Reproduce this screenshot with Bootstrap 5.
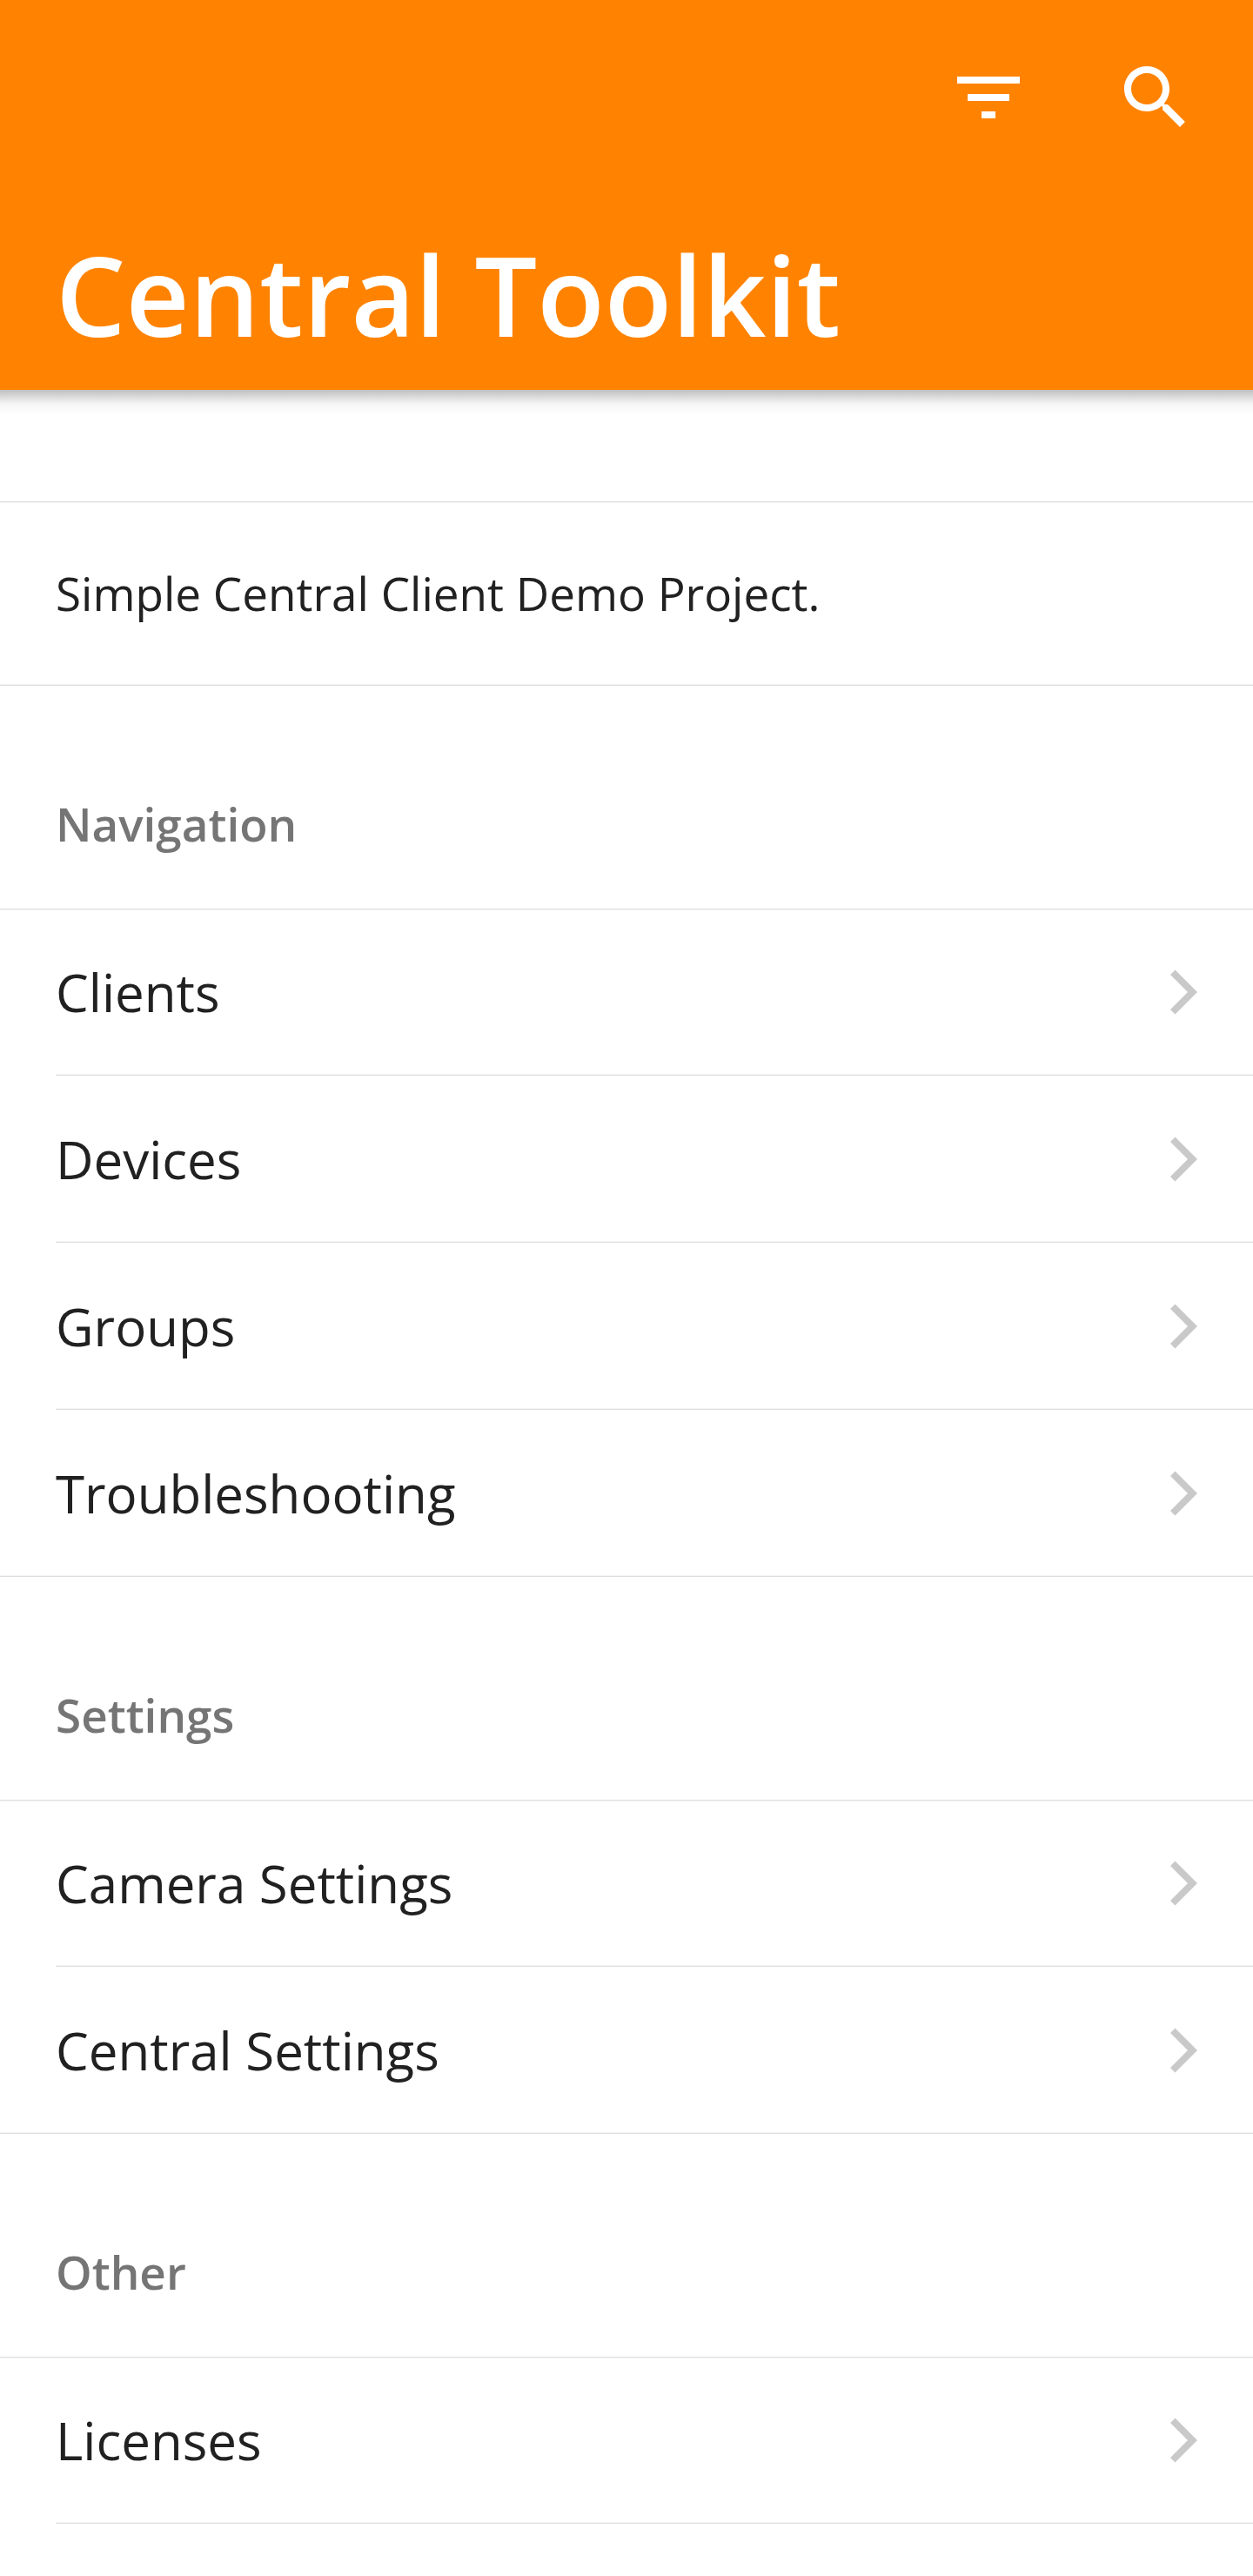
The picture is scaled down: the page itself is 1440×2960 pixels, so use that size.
<!DOCTYPE html>
<html lang="en">
<head>
<meta charset="utf-8">
<meta name="viewport" content="width=device-width, initial-scale=1">
<title>Central Toolkit</title>
<link rel="stylesheet" href="https://cdn.jsdelivr.net/npm/bootstrap@5.3.0/dist/css/bootstrap.min.css">
<style>
  :root {
    --brand: #ff8300;
    --gutter: 64px;
    --line-top: linear-gradient(#dfdfdf 50%, #f3f3f3 50%);
    --line-bottom: linear-gradient(#f3f3f3 50%, #dfdfdf 50%);
  }
  body {
    font-family: "Open Sans", "Noto Sans", sans-serif;
    color: #212121;
    background: #fff;
  }
  .app-header { background: var(--brand); color: #fff; }
  .app-actions { height: 224px; padding-right: 16px; }
  .icon-btn { padding: 0 48px; color: #fff; border: 0; border-radius: 0; }
  .icon-btn:hover, .icon-btn:active { color: #fff; opacity: .8; }
  .icon-btn svg { width: 96px; height: 96px; }
  .app-title {
    padding: 4px var(--gutter) 0;
    font-size: 127px;
    font-weight: 600;
    line-height: 220px;
  }
  .header-shade {
    height: 32px;
    margin-bottom: 96px;
    background: linear-gradient(rgba(0,0,0,.25) 0%, rgba(0,0,0,.08) 40%, rgba(0,0,0,.04) 50%, rgba(0,0,0,0) 90%);
  }
  .intro-block {
    padding: 64px var(--gutter);
    font-size: 53px;
    line-height: 84px;
    background: var(--line-top) no-repeat 0 0 / 100% 2px, var(--line-bottom) no-repeat 0 100% / 100% 2px;
  }
  .section-title {
    padding: 131px var(--gutter) 69px;
    font-size: 53px;
    font-weight: 600;
    line-height: 56px;
    color: #757575;
  }
  .link-list { background: var(--line-top) no-repeat 0 0 / 100% 2px; }
  .link-row {
    min-height: 192px;
    padding: 0 var(--gutter);
    font-size: 60px;
    line-height: 96px;
    color: inherit;
    background: var(--line-bottom) no-repeat var(--gutter) 100% / 100% 2px;
  }
  .link-list:not(.is-open) li:last-child .link-row { background-position: 0 100%; }
  .link-row svg { width: 32px; height: 52px; fill: #c9c9c9; }
</style>
<script src="https://cdn.jsdelivr.net/npm/bootstrap@5.3.0/dist/js/bootstrap.bundle.min.js"></script>
</head>
<body>
<svg class="d-none" aria-hidden="true">
  <symbol id="chevron" viewBox="0 0 32 52"><path d="M6.500 .5L32 26 6.500 51.500 1 46 21 26 1 6z"/></symbol>
</svg>

<header class="app-header">
  <div class="app-actions d-flex justify-content-end align-items-stretch">
    <button type="button" class="btn icon-btn d-flex align-items-center" aria-label="Filter">
      <svg viewBox="0 0 24 24" fill="currentColor" aria-hidden="true"><path d="M10 18h4v-2h-4v2zM3 6v2h18V6H3zm3 7h12v-2H6v2z"/></svg>
    </button>
    <button type="button" class="btn icon-btn d-flex align-items-center" aria-label="Search">
      <svg viewBox="0 0 24 24" fill="currentColor" aria-hidden="true"><path d="M15.500 14h-.79l-.28-.27C15.410 12.590 16 11.110 16 9.500 16 5.910 13.090 3 9.500 3S3 5.910 3 9.500 5.910 16 9.500 16c1.610 0 3.090-.59 4.230-1.570l.27.28v.79l5 4.990L20.490 19l-4.990-5zm-6 0C7.010 14 5 11.990 5 9.500S7.010 5 9.500 5 14 7.010 14 9.500 11.990 14 9.500 14z"/></svg>
    </button>
  </div>
  <h1 class="app-title m-0">Central Toolkit</h1>
</header>
<div class="header-shade"></div>

<main>
  <p class="intro-block m-0">Simple Central Client Demo Project.</p>

  <section>
    <h2 class="section-title m-0">Navigation</h2>
    <ul class="link-list list-unstyled m-0">
      <li><a href="#clients" class="link-row d-flex justify-content-between align-items-center text-decoration-none">Clients<svg aria-hidden="true"><use href="#chevron"/></svg></a></li>
      <li><a href="#devices" class="link-row d-flex justify-content-between align-items-center text-decoration-none">Devices<svg aria-hidden="true"><use href="#chevron"/></svg></a></li>
      <li><a href="#groups" class="link-row d-flex justify-content-between align-items-center text-decoration-none">Groups<svg aria-hidden="true"><use href="#chevron"/></svg></a></li>
      <li><a href="#troubleshooting" class="link-row d-flex justify-content-between align-items-center text-decoration-none">Troubleshooting<svg aria-hidden="true"><use href="#chevron"/></svg></a></li>
    </ul>
  </section>

  <section>
    <h2 class="section-title m-0">Settings</h2>
    <ul class="link-list list-unstyled m-0">
      <li><a href="#camera" class="link-row d-flex justify-content-between align-items-center text-decoration-none">Camera Settings<svg aria-hidden="true"><use href="#chevron"/></svg></a></li>
      <li><a href="#central" class="link-row d-flex justify-content-between align-items-center text-decoration-none">Central Settings<svg aria-hidden="true"><use href="#chevron"/></svg></a></li>
    </ul>
  </section>

  <section>
    <h2 class="section-title m-0">Other</h2>
    <ul class="link-list is-open list-unstyled m-0">
      <li><a href="#licenses" class="link-row d-flex justify-content-between align-items-center text-decoration-none">Licenses<svg aria-hidden="true"><use href="#chevron"/></svg></a></li>
    </ul>
  </section>
</main>
</body>
</html>
